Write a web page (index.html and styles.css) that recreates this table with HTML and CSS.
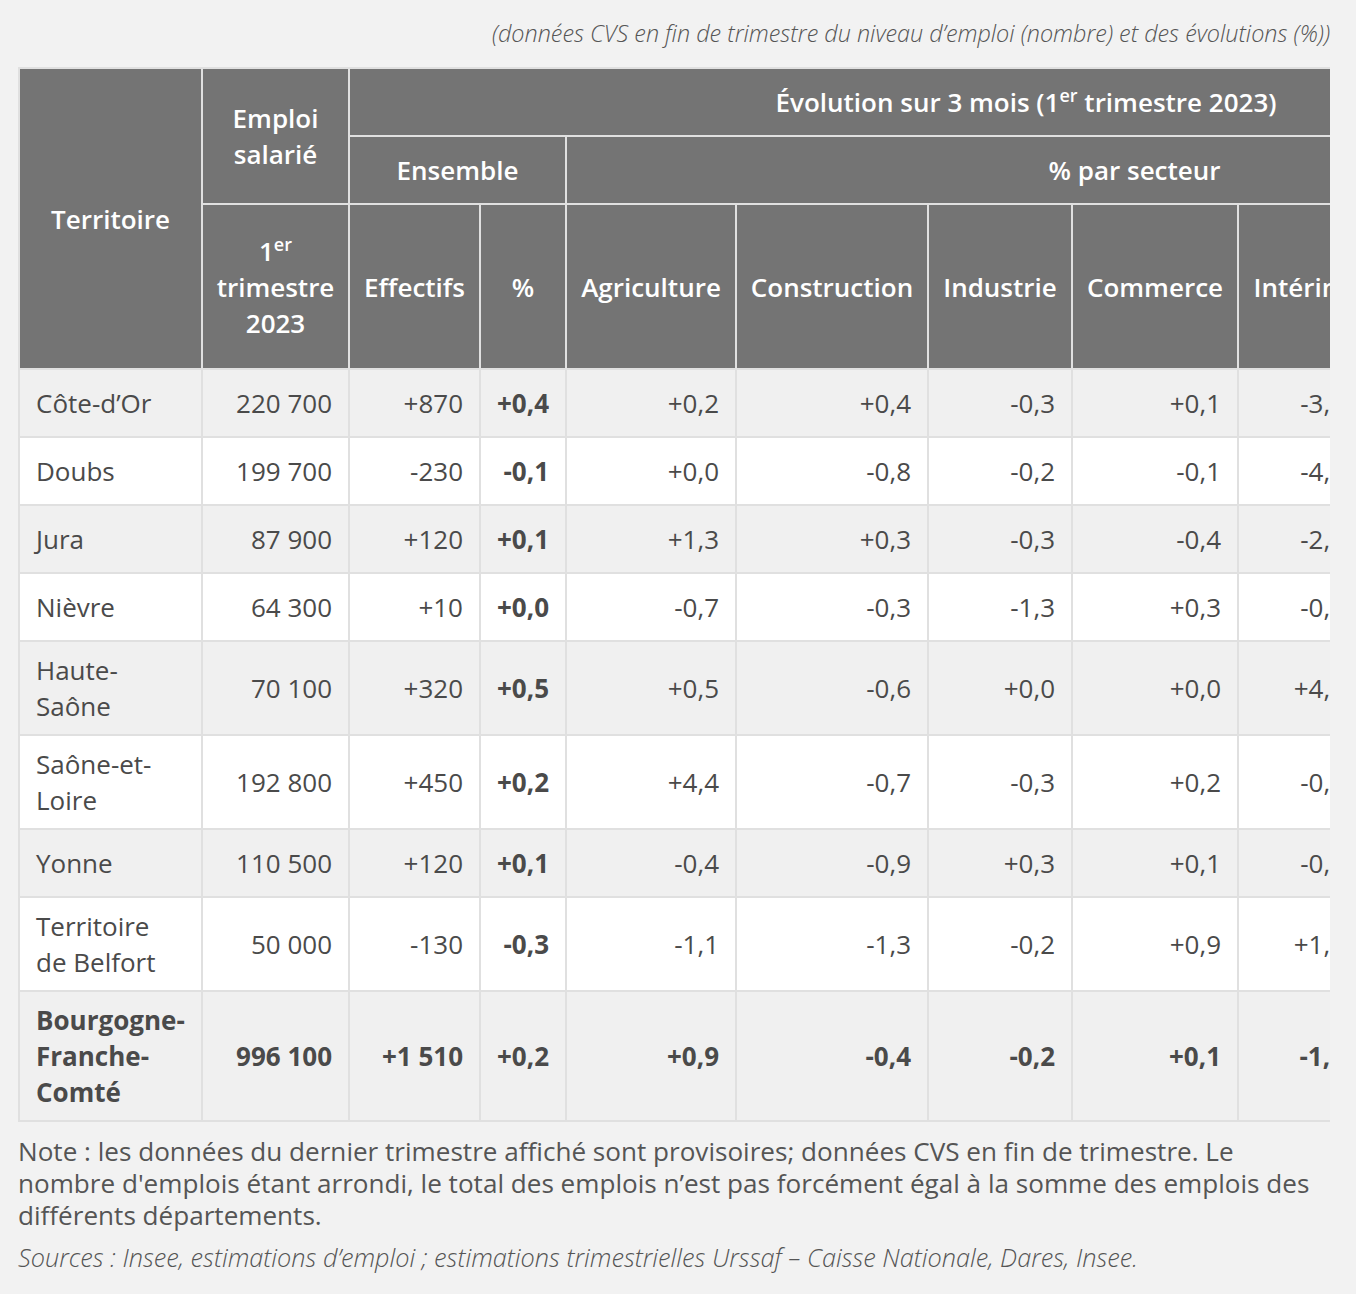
FILE: index.html
```html
<!DOCTYPE html>
<html lang="fr">
<head>
<meta charset="utf-8">
<title>Emploi salarié</title>
<link rel="stylesheet" href="styles.css">
</head>
<body>
<p class="unit">(données CVS en fin de trimestre du niveau d’emploi (nombre) et des évolutions (%))</p>
<div class="scroller">
<table class="data">
<colgroup>
<col class="c-terr"><col class="c-emp"><col class="c-eff"><col class="c-pct"><col class="c-agr"><col class="c-con"><col class="c-ind"><col class="c-com"><col class="c-int"><col class="c-s1"><col class="c-s2">
</colgroup>
<thead>
<tr class="h1">
<th rowspan="3">Territoire</th>
<th rowspan="2">Emploi salarié</th>
<th colspan="9">Évolution sur 3 mois (1<sup>er</sup> trimestre 2023)</th>
</tr>
<tr class="h2">
<th colspan="2">Ensemble</th>
<th colspan="7">% par secteur</th>
</tr>
<tr class="h3">
<th>1<sup>er</sup> trimestre 2023</th>
<th>Effectifs</th>
<th>%</th>
<th>Agriculture</th>
<th>Construction</th>
<th>Industrie</th>
<th>Commerce</th>
<th>Intérim</th>
<th>Services marchands</th>
<th>Services non marchands</th>
</tr>
</thead>
<tbody>
<tr><td>Côte-d’Or</td><td>220 700</td><td>+870</td><td class="b">+0,4</td><td>+0,2</td><td>+0,4</td><td>-0,3</td><td>+0,1</td><td>-3,2</td><td>+0,2</td><td>+0,1</td></tr>
<tr><td>Doubs</td><td>199 700</td><td>-230</td><td class="b">-0,1</td><td>+0,0</td><td>-0,8</td><td>-0,2</td><td>-0,1</td><td>-4,1</td><td>+0,1</td><td>+0,0</td></tr>
<tr><td>Jura</td><td>87 900</td><td>+120</td><td class="b">+0,1</td><td>+1,3</td><td>+0,3</td><td>-0,3</td><td>-0,4</td><td>-2,3</td><td>+0,3</td><td>+0,1</td></tr>
<tr><td>Nièvre</td><td>64 300</td><td>+10</td><td class="b">+0,0</td><td>-0,7</td><td>-0,3</td><td>-1,3</td><td>+0,3</td><td>-0,7</td><td>+0,2</td><td>+0,0</td></tr>
<tr><td>Haute-Saône</td><td>70 100</td><td>+320</td><td class="b">+0,5</td><td>+0,5</td><td>-0,6</td><td>+0,0</td><td>+0,0</td><td>+4,0</td><td>+0,4</td><td>+0,2</td></tr>
<tr><td>Saône-et-Loire</td><td>192 800</td><td>+450</td><td class="b">+0,2</td><td>+4,4</td><td>-0,7</td><td>-0,3</td><td>+0,2</td><td>-0,4</td><td>+0,5</td><td>+0,1</td></tr>
<tr><td>Yonne</td><td>110 500</td><td>+120</td><td class="b">+0,1</td><td>-0,4</td><td>-0,9</td><td>+0,3</td><td>+0,1</td><td>-0,4</td><td>+0,3</td><td>+0,0</td></tr>
<tr><td>Territoire de Belfort</td><td>50 000</td><td>-130</td><td class="b">-0,3</td><td>-1,1</td><td>-1,3</td><td>-0,2</td><td>+0,9</td><td>+1,4</td><td>-0,5</td><td>-0,1</td></tr>
<tr class="total"><td>Bourgogne-Franche-Comté</td><td>996 100</td><td>+1 510</td><td>+0,2</td><td>+0,9</td><td>-0,4</td><td>-0,2</td><td>+0,1</td><td>-1,7</td><td>+0,3</td><td>+0,1</td></tr>
</tbody>
</table>
</div>
<p class="note">Note : les données du dernier trimestre affiché sont provisoires; données CVS en fin de trimestre. Le nombre d'emplois étant arrondi, le total des emplois n’est pas forcément égal à la somme des emplois des différents départements.</p>
<p class="sources">Sources : Insee, estimations d’emploi ; estimations trimestrielles Urssaf – Caisse Nationale, Dares, Insee.</p>
</body>
</html>
```
FILE: styles.css
```css
html, body {
  margin: 0;
  background: #f2f2f2;
}
body {
  padding: 18px 26px 0 18px;
  font-family: "Open Sans", "Noto Sans", sans-serif;
  color: #4a4a4a;
}
.unit {
  margin: 0 0 19px;
  text-align: right;
  font-style: italic;
  font-weight: 300;
  font-size: 23.4px;
  line-height: 30px;
  color: #555;
}
.scroller {
  width: 1312px;
  overflow: hidden;
}
.data {
  border-collapse: collapse;
  table-layout: fixed;
  width: 1684px;
  font-size: 26px;
  line-height: 36px;
  border: 2px solid #e0e0e0;
}
.c-terr { width: 183px; }
.c-emp { width: 147px; }
.c-eff { width: 131px; }
.c-pct { width: 86px; }
.c-agr { width: 170px; }
.c-con { width: 192px; }
.c-ind { width: 144px; }
.c-com { width: 166px; }
.c-int { width: 124px; }
.c-s1 { width: 170px; }
.c-s2 { width: 171px; }

.data th {
  background: #747474;
  color: #fff;
  font-weight: 600;
  text-align: center;
  vertical-align: middle;
  padding: 10px 8px;
  border: 2px solid #e0e0e0;
}
.data sup {
  font-size: 18px;
  line-height: 0;
}
.h1, .h2 { height: 68px; }
.h3 { height: 165px; }

.data td {
  padding: 10px 16px;
  border: 2px solid #e0e0e0;
  text-align: right;
  vertical-align: middle;
  background: #fff;
}
.data td:first-child {
  text-align: left;
  padding-right: 20px;
}
.data tbody tr { height: 68px; }
.data tbody tr:nth-child(odd) td {
  background: #f0f0f0;
}
.data td.b { font-weight: 700; }
.data tr.total td { font-weight: 700; }

.note {
  margin: 13px 0 0;
  font-size: 26.1px;
  line-height: 32px;
  color: #555;
}
.sources {
  margin: 10px 0 0;
  font-size: 25.3px;
  line-height: 32px;
  font-style: italic;
  font-weight: 300;
  color: #555;
}
```
